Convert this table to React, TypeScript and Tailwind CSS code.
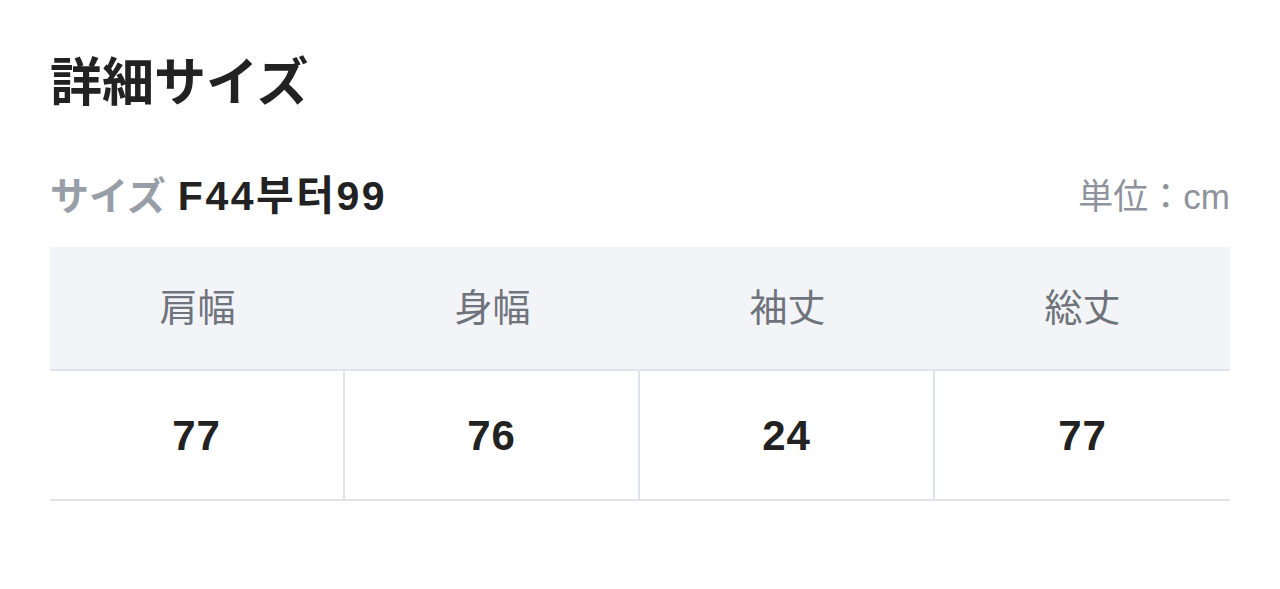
const columns = [
  { label: "肩幅", value: "77" },
  { label: "身幅", value: "76" },
  { label: "袖丈", value: "24" },
  { label: "総丈", value: "77" },
];

const font = {
  fontFamily: '"Liberation Sans", "Noto Sans CJK JP", "Noto Sans CJK KR", sans-serif',
};

export default function App() {
  return (
    <div className="w-[1280px] h-[589px] bg-white px-[50px] pt-[51px]" style={font}>
      <h2 className="text-[52px] leading-[64px] font-bold text-[#222]">詳細サイズ</h2>

      <div className="mt-[62px] flex items-center justify-between h-[40px]">
        <div className="flex items-center gap-[12px] font-bold">
          <span className="text-[39px] text-[#989ea8]">サイズ</span>
          <span className="text-[41px] tracking-[2.5px] text-[#222]">F44부터99</span>
        </div>
        <span className="text-[35px] text-[#8e939c]">単位：cm</span>
      </div>

      <div className="mt-[30px]">
        <div className="grid grid-cols-4 h-[124px] bg-[#f3f4f8] border-b-2 border-[#e1e3ea]">
          {columns.map((c) => (
            <div key={c.label} className="flex items-center justify-center text-[38px] text-[#6f737b]">
              {c.label}
            </div>
          ))}
        </div>
        <div className="grid grid-cols-4 h-[130px] border-b-2 border-[#e1e3ea]">
          {columns.map((c, i) => (
            <div
              key={c.label}
              className={`flex items-center justify-center text-[42px] tracking-[1px] font-bold text-[#222] ${
                i < 3 ? "border-r-2 border-[#e1e3ea]" : ""
              }`}
            >
              {c.value}
            </div>
          ))}
        </div>
      </div>
    </div>
  );
}
